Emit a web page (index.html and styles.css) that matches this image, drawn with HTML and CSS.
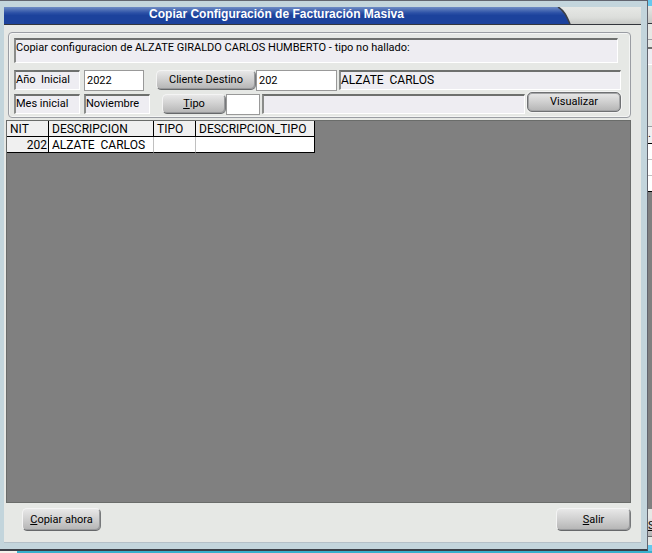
FILE: index.html
```
<!DOCTYPE html>
<html lang="es">
<head>
    <meta charset="utf-8">
    <meta name="viewport" content="width=device-width, initial-scale=1.0">
    <title>Copiar Configuración de Facturación Masiva</title>
    <link rel="stylesheet" href="styles.css">
</head>
<body>

<div class="desktop">
    <form class="window">
        <div class="titlebar">
            <h1 class="title">Copiar Configuración de Facturación Masiva</h1>
            <svg class="title-curve" viewBox="0 0 14 17" width="14" height="17">
                <defs>
                    <linearGradient id="blue" x1="0" y1="0" x2="0" y2="1">
                        <stop offset="0" stop-color="#6f8cc4"/>
                        <stop offset="0.35" stop-color="#2b50a6"/>
                        <stop offset="0.5" stop-color="#1c429c"/>
                    </linearGradient>
                </defs>
                <path d="M0 0H1C7 3 10 10 13 17H0Z" fill="url(#blue)"/>
                <path d="M1 0C7 3 10 10 13 17" fill="none" stroke="#3c4048" stroke-width="1.5"/>
            </svg>
            <div class="title-rest"></div>
        </div>

        <div class="content">
            <div class="group">
                <div class="sunken message">Copiar configuracion de ALZATE GIRALDO CARLOS HUMBERTO - tipo no hallado:</div>
                <div class="row">
                    <label class="sunken caption" for="anio">Año  Inicial</label>
                    <input class="box year" type="text" id="anio" value="2022">
                    <button class="btn btn-client" type="button">Cliente Destino</button>
                    <input class="box client" type="text" id="cliente" aria-label="Cliente Destino" value="202">
                    <div class="sunken fill">ALZATE  CARLOS</div>
                </div>
                <div class="row">
                    <div class="sunken caption">Mes inicial</div>
                    <div class="sunken month">Noviembre</div>
                    <button class="btn btn-type" type="button"><u>T</u>ipo</button>
                    <input class="box type" type="text" id="tipo" aria-label="Tipo">
                    <div class="sunken fill"></div>
                    <button class="btn btn-view" type="button">Visualizar</button>
                </div>
            </div>

            <div class="grid">
                <table>
                    <thead>
                        <tr>
                            <th class="col-nit">NIT</th>
                            <th class="col-desc">DESCRIPCION</th>
                            <th class="col-tipo">TIPO</th>
                            <th class="col-dtipo">DESCRIPCION_TIPO</th>
                        </tr>
                    </thead>
                    <tbody>
                        <tr>
                            <td class="fixed">202</td>
                            <td>ALZATE  CARLOS</td>
                            <td></td>
                            <td></td>
                        </tr>
                    </tbody>
                </table>
            </div>

            <div class="actions">
                <button class="btn btn-copy" type="button"><u>C</u>opiar ahora</button>
                <button class="btn btn-exit" type="button"><u>S</u>alir</button>
            </div>
        </div>
    </form>

    <!-- edge of the window underneath -->
    <div class="behind">
        <div class="behind-sky"></div>
        <div class="behind-title"></div>
        <div class="behind-gap"></div>
        <div class="behind-field"></div>
        <div class="behind-panel"></div>
        <div class="behind-head">.</div>
        <div class="behind-cell"></div>
        <div class="behind-cell"></div>
        <div class="behind-cell last"></div>
        <div class="behind-grid"></div>
        <div class="behind-foot"><div class="behind-btn"><u>S</u></div></div>
        <div class="behind-sky"></div>
    </div>
</div>
<div class="taskbar"><div class="taskbar-start"></div></div>

</body>
</html>
```
FILE: styles.css
```
* {
    box-sizing: border-box;
}

body {
    margin: 0;
    min-height: 100vh;
    display: flex;
    flex-direction: column;
    font-family: Roboto, "Liberation Sans", sans-serif;
    font-size: 11px;
    line-height: 14px;
    color: #000;
}

.desktop {
    flex: 1;
    display: flex;
}

.window {
    flex: 1;
    display: flex;
    flex-direction: column;
    padding: 6px 6px 6px 4px;
    background: #c3d5dc;
    border-top: 1px solid #62656f;
    border-right: 1px solid #62656f;
    border-bottom: 2px solid #3c4048;
}

.titlebar {
    display: flex;
    height: 18px;
    border-bottom: 1px solid #33363c;
}

.title {
    flex: 1;
    margin: 0;
    padding-right: 8px;
    font-family: "Liberation Sans", sans-serif;
    font-size: 12px;
    font-weight: bold;
    line-height: 14px;
    text-align: center;
    color: #fff;
    background: linear-gradient(#6f8cc4, #2b50a6 35%, #1c429c 50%);
}

.title-curve,
.title-rest {
    background: linear-gradient(#e6e8e5, #dcdedb 60%, #c8cac7);
}

.title-rest {
    width: 11%;
}

.content {
    flex: 1;
    display: flex;
    flex-direction: column;
    padding: 7px 10px 11px 2px;
    background: #e6e8e5;
    border-bottom: 1px solid #b4c0c8;
}

.group {
    display: flex;
    flex-direction: column;
    margin-left: 2px;
    padding: 5px 9px 1px 5px;
    border: 1px solid #9a9da3;
    border-radius: 4px;
    box-shadow: inset 1px 1px 0 #f4f5f4, inset -1px -1px 0 #f4f5f4;
}

.row {
    display: flex;
    align-items: center;
    height: 24px;
}

.sunken {
    height: 20px;
    padding: 1px 0;
    background: #eeedf2;
    border: 1px solid #fff;
    border-top: 2px solid #6e706e;
    border-left: 2px solid #8a8c8a;
    white-space: pre;
}

.message {
    height: 25px;
    margin: 0 3px 5px 0;
}

.caption {
    width: 66px;
    margin-right: 4px;
}

.month {
    width: 66px;
    margin-right: 12px;
}

.fill {
    flex: 1;
    margin-left: 2px;
    font-size: 12px;
}

.box {
    height: 21px;
    padding: 0 2px;
    background: #fff;
    border: 1px solid #999;
    border-radius: 0;
    font: inherit;
}

.year {
    width: 60px;
    margin-right: 12px;
}

.client {
    width: 81px;
}

.type {
    width: 34px;
}

.btn {
    height: 20px;
    padding: 0;
    border: 1px solid #f4f4f4;
    border-right-color: #77797b;
    border-bottom-color: #66686a;
    border-radius: 5px;
    background: linear-gradient(#e8e8e8, #cfcfcf 50%, #b4b4b4);
    box-shadow: inset -1px -1px 0 #98999b;
    font: inherit;
    color: #000;
}

.btn-client {
    width: 100px;
}

.btn-type {
    width: 64px;
}

.btn-view {
    align-self: flex-start;
    width: 94px;
    margin-left: 2px;
    border-color: #6f7173;
    box-shadow: inset 0 0 0 1px #a4a5a7, 0 0 0 1px #f4f4f4;
}

.grid {
    flex: 1;
    margin-top: 2px;
    background: #808080;
    border: 1px solid #6a6c6a;
}

table {
    border-collapse: separate;
    border-spacing: 0;
    table-layout: fixed;
    width: 308px;
    font-size: 12px;
}

th,
td {
    height: 16px;
    padding: 0 3px;
    border-right: 1px solid #000;
    border-bottom: 1px solid #000;
    font-weight: normal;
    text-align: left;
    white-space: pre;
}

th {
    background: #f0f0f0;
}

td {
    background: #fff;
    border-right-color: #c0c0c0;
}

td:last-child {
    border-right-color: #000;
}

.fixed {
    padding-right: 1px;
    background: #f0f0f0;
    border-right-color: #000;
    text-align: right;
}

.col-nit,
.col-tipo {
    width: 42px;
}

.col-desc {
    width: 105px;
}

.col-dtipo {
    width: 119px;
}

.actions {
    display: flex;
    justify-content: space-between;
    padding: 5px 0 0 16px;
}

.actions .btn {
    height: 23px;
}

.btn-copy {
    width: 79px;
}

.btn-exit {
    width: 75px;
}

.behind {
    display: flex;
    flex-direction: column;
    width: 4px;
    overflow: hidden;
    background: #e6e8e5;
}

.behind-sky {
    height: 6px;
    background: #66c8ee;
}

.behind-title {
    height: 18px;
    background: linear-gradient(#e6e8e5, #c8cac7);
    border-bottom: 1px solid #33363c;
}

.behind-gap {
    height: 16px;
    border-bottom: 1px solid #9a9da3;
}

.behind-field {
    height: 18px;
    margin-top: 7px;
    background: #eeedf2;
    border-top: 2px solid #6e706e;
    border-bottom: 1px solid #fff;
}

.behind-panel {
    height: 62px;
    border-bottom: 1px solid #9a9da3;
}

.behind-head {
    height: 17px;
    background: #f0f0f0;
    border-bottom: 1px solid #000;
}

.behind-cell {
    height: 16px;
    background: #fff;
    border-bottom: 1px solid #c0c0c0;
}

.last {
    border-bottom-color: #000;
}

.behind-grid {
    flex: 1;
    background: #808080;
}

.behind-foot {
    height: 36px;
    padding: 8px 0;
}

.behind-btn {
    height: 20px;
    padding-top: 2px;
    background: linear-gradient(#e8e8e8, #b4b4b4);
    border-bottom: 1px solid #66686a;
}

.taskbar {
    height: 2px;
    background: #3ab0cc;
}

.taskbar-start {
    width: 17px;
    height: 2px;
    background: #f4f2ec;
}
```
